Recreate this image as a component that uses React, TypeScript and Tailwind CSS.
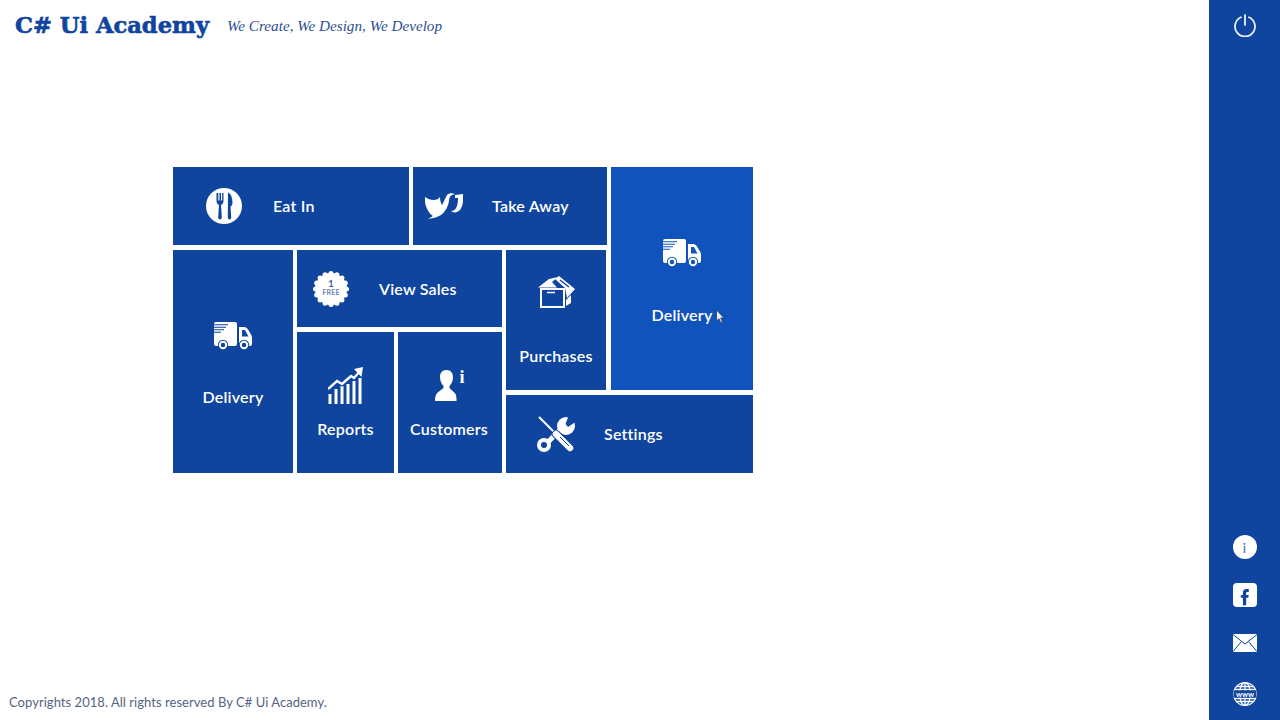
import type { ReactNode } from 'react'

const tileBlue = '#0f459f'
const hoverBlue = '#1053bc'

function Truck({ bg = tileBlue }: { bg?: string }) {
  return (
    <svg width="38" height="28" viewBox="0 0 38 28">
      <rect x="0" y="0" width="23" height="24" rx="2" fill="white" />
      <path d="M0 2.800h14M0 5.300h12M0 7.800h10M0 10.300h7" stroke={bg} strokeWidth="1.100" />
      <path d="M25 5h5c2 0 3 1 4 2.500l3 5c.7 1 1 2 1 3V22c0 1-1 2-2 2H25z" fill="white" />
      <path d="M28 8v6.500h6.500l-2.600-4.800C31.300 8.500 31 8 30 8z" fill={bg} />
      <circle cx="9" cy="23" r="5.200" fill={bg} />
      <circle cx="30" cy="23" r="5.200" fill={bg} />
      <circle cx="9" cy="23" r="3.200" fill="none" stroke="white" strokeWidth="2" />
      <circle cx="30" cy="23" r="3.200" fill="none" stroke="white" strokeWidth="2" />
    </svg>
  )
}

function EatIcon() {
  return (
    <svg width="36" height="36" viewBox="0 0 36 36">
      <circle cx="18" cy="18" r="18" fill="white" />
      <path d="M10.500 5v8c0 2.500 1.500 3.500 2.500 4l-.8 12c0 1.500.6 2.500 1.800 2.500s1.800-1 1.800-2.500l-.8-12c1-.5 2.500-1.500 2.500-4V5h-1.300v7.500h-1.200V5h-1.500v7.500h-1.200V5z" fill={tileBlue} />
      <path d="M22 4.500c2.800 1 4.500 5 4.500 10 0 2-.8 3.500-2 4l.7 10.500c0 1.500-.6 2.500-1.700 2.500S21.800 30.500 21.800 29z" fill={tileBlue} />
    </svg>
  )
}

function TakeAwayIcon() {
  return (
    <svg width="38" height="28" viewBox="0 0 38 28" fill="white">
      <path d="M0 5C4 8 9 9 13 7L15 5C15 9 16 11 17 13C19 10 20 6 22 3C24 1 27 1 30 2L27 3C25 4 24 6 24 9C23 15 20 20 16 23C13 25 9 26 3 27L8 24C3 21-1 12 0 5z" />
      <path d="M30 3L38 2C38.500 8 38 14 35 18C32 21 28 21 26 19C29 19 31 17 32 14C33 11 33 8 33 6L30 6z" />
    </svg>
  )
}

function BadgeIcon() {
  const dots = Array.from({ length: 16 }, (_, i) => (i * Math.PI) / 8)
  return (
    <svg width="36" height="36" viewBox="0 0 36 36">
      <circle cx="18" cy="18" r="16" fill="white" />
      {dots.map((a) => (
        <circle key={a} cx={18 + 15.5 * Math.cos(a)} cy={18 + 15.5 * Math.sin(a)} r="2.500" fill="white" />
      ))}
      <text x="18" y="16" textAnchor="middle" fontSize="10" fontWeight="700" fill="#3f66a8" fontFamily="Lato, sans-serif">1</text>
      <text x="18" y="24" textAnchor="middle" fontSize="7" fontWeight="700" fill="#6a86b8" fontFamily="Lato, sans-serif">FREE</text>
    </svg>
  )
}

function BoxIcon() {
  return (
    <svg width="37" height="32" viewBox="0 0 37 32" fill="none">
      <path d="M3 13H26V31H3z" stroke="white" strokeWidth="2" />
      <path d="M9 16.500h8" stroke="white" strokeWidth="1.500" />
      <path d="M0 11.500L11 3 20 1 14 6 19 11.500z" fill="white" />
      <path d="M17 3L21 0 37 13 29 22 27 12z" fill="white" />
      <path d="M22 4L31 11" stroke={tileBlue} strokeWidth="1.500" />
      <path d="M28 24L33 19V27L28 30z" fill="white" />
    </svg>
  )
}

function ReportsIcon() {
  const bars = [28, 23, 20, 18, 15, 12]
  return (
    <svg width="36" height="38" viewBox="0 0 36 38" fill="white">
      {bars.map((top, i) => (
        <rect key={i} x={0.5 + i * 6} y={top} width="3" height={38 - top} />
      ))}
      <path d="M0 23L9 15 14 18 23 10 26 12 33 4" fill="none" stroke={tileBlue} strokeWidth="4.500" />
      <path d="M0 23L9 15 14 18 23 10 26 12 33 4" fill="none" stroke="white" strokeWidth="2.400" />
      <path d="M26 3L35 1 33.500 11z" />
    </svg>
  )
}

function CustomerIcon() {
  return (
    <svg width="32" height="34" viewBox="0 0 32 34" fill="white">
      <path d="M12.500 2C17 2 19 5.500 19 9C19 13 17.500 16 15.500 18V20C17 22 21 24 22 27C22.500 29 22.500 31 22.500 33H1C1 31 1 29 2 27C3 24 7.500 22 9.500 20V18C7.500 16 6 13 6 9C6 5 8 2 12.500 2z" />
      <text x="28" y="15" textAnchor="middle" fontSize="18" fill="white" fontFamily="Liberation Serif, serif">i</text>
    </svg>
  )
}

function ToolsIcon() {
  return (
    <svg width="38" height="38" viewBox="0 0 38 38">
      {/* wrench */}
      <path d="M8 30L25 13" stroke="white" strokeWidth="5" />
      <circle cx="7" cy="30" r="7" fill="white" />
      <circle cx="7" cy="30" r="3" fill={tileBlue} />
      <circle cx="29" cy="11" r="9" fill="white" />
      <path d="M28.500 9L32 0 40 0 40 6 31 12z" fill={tileBlue} />
      {/* screwdriver */}
      <path d="M2 2L19 19" stroke={tileBlue} strokeWidth="4.500" />
      <path d="M2 2L19 19" stroke="white" strokeWidth="2" />
      <path d="M19 19L33 33" stroke={tileBlue} strokeWidth="8.500" strokeLinecap="round" />
      <path d="M19 19L33 33" stroke="white" strokeWidth="6.500" strokeLinecap="round" />
      <path d="M23 22L32 31" stroke={tileBlue} strokeWidth="1" />
    </svg>
  )
}

function Tile({ className, children }: { className: string; children: ReactNode }) {
  return <div className={`text-[16px] font-semibold tracking-[0.2px] text-white ${className}`}>{children}</div>
}

export default function App() {
  return (
    <div className="flex h-screen w-full overflow-hidden bg-white font-['Lato',sans-serif]">
      <div className="flex min-w-0 flex-1 flex-col">
        {/* Header */}
        <header className="flex items-center pt-[9px] pl-[15px]">
          <h1 className="font-['DejaVu_Serif',serif] text-[22.600px] leading-[32px] font-bold text-[#0f459f] [-webkit-text-stroke:0.6px_#0f459f]">C# Ui Academy</h1>
          <span className="mt-[2px] ml-[18px] font-['Liberation_Serif',serif] text-[15.200px] text-[#2c4f8f] italic">We Create, We Design, We Develop</span>
        </header>

        {/* Tiles */}
        <div className="mt-[126px] ml-[173px] grid w-[580px] grid-cols-[120px_97px_11px_89px_101px_142px] grid-rows-[78px_77px_58px_78px] gap-x-[4px] gap-y-[5px]">
          <Tile className="col-span-3 flex items-center bg-[#0f459f] pl-[33px]">
            <EatIcon />
            <span className="ml-[31px]">Eat In</span>
          </Tile>
          <Tile className="col-span-2 flex items-center bg-[#0f459f] pl-[12px]">
            <TakeAwayIcon />
            <span className="ml-[29px]">Take Away</span>
          </Tile>
          <Tile className="col-start-6 row-span-3 row-start-1 flex flex-col items-center bg-[#1053bc] pt-[72px]">
            <Truck bg={hoverBlue} />
            <span className="mt-[36px]">Delivery</span>
          </Tile>
          <Tile className="row-span-3 flex flex-col items-center bg-[#0f459f] pt-[72px]">
            <Truck />
            <span className="mt-[35px]">Delivery</span>
          </Tile>
          <Tile className="col-span-3 flex items-center bg-[#0f459f] pl-[16px]">
            <BadgeIcon />
            <span className="ml-[30px]">View Sales</span>
          </Tile>
          <Tile className="row-span-2 mr-[1px] flex flex-col items-center bg-[#0f459f] pt-[26px]">
            <BoxIcon />
            <span className="mt-[36px]">Purchases</span>
          </Tile>
          <Tile className="col-start-2 row-span-2 flex flex-col items-center bg-[#0f459f] pt-[34px]">
            <ReportsIcon />
            <span className="mt-[13px]">Reports</span>
          </Tile>
          <Tile className="col-span-2 row-span-2 flex flex-col items-center bg-[#0f459f] pt-[36px]">
            <CustomerIcon />
            <span className="mt-[15px] mr-[2px]">Customers</span>
          </Tile>
          <Tile className="col-span-2 col-start-5 flex items-center bg-[#0f459f] pl-[31px]">
            <ToolsIcon />
            <span className="ml-[29px]">Settings</span>
          </Tile>
        </div>

        {/* Footer */}
        <footer className="mt-auto pb-[8px] pl-[9px] text-[13px] tracking-[0.04px] text-[#56657f]">Copyrights 2018. All rights reserved By C# Ui Academy.</footer>
      </div>

      {/* Right bar */}
      <aside className="flex w-[71px] shrink-0 flex-col items-center bg-[#0f459f] pt-[13px] pb-[14px]">
        <svg width="24" height="24" viewBox="0 0 24 24" fill="none" stroke="#e8f0fb" strokeWidth="1.800" strokeLinecap="round">
          <path d="M12 2v10" />
          <path d="M8 4.300a10 10 0 1 0 8 0" />
        </svg>
        <div className="mt-auto flex flex-col items-center">
          <div className="flex h-[24px] w-[24px] items-center justify-center rounded-full bg-white text-[14px] text-[#3f66a8]">i</div>
          <div className="mt-[24px] flex h-[24px] w-[24px] items-end justify-center rounded-[4px] bg-white">
            <svg width="10" height="20" viewBox="0 0 12 20" fill="#0f459f">
              <path d="M3.500 20V11H1V7.500h2.500V5c0-3 1.700-4.500 4.300-4.500H10.500V4H9c-1.200 0-1.600.6-1.600 1.700v1.800h3L10 11H7.400v9z" />
            </svg>
          </div>
          <svg className="mt-[27px]" width="24" height="18" viewBox="0 0 24 18">
            <rect width="24" height="18" fill="white" />
            <path d="M0 .5l12 9.500L24 .5M0 17.500l8.500-10M24 17.500l-8.500-10" fill="none" stroke="#0f459f" strokeWidth="1" />
          </svg>
          <svg className="mt-[30px]" width="24" height="24" viewBox="0 0 24 24" fill="white" fillOpacity="0.25" stroke="white" strokeWidth="1.100">
            <circle cx="12" cy="12" r="11.400" />
            <ellipse cx="12" cy="12" rx="5.500" ry="11.400" fill="none" />
            <path d="M12 .5v23M3 4.500h18M1.500 7.500h21M1.500 16.500h21M3 19.500h18" fill="none" />
            <rect x="0.500" y="8.500" width="23" height="7" fill="#0f459f" fillOpacity="1" stroke="none" />
            <text x="12" y="14.500" textAnchor="middle" fontSize="7.500" fontWeight="700" fill="white" fillOpacity="1" stroke="none" fontFamily="Lato, sans-serif">www</text>
          </svg>
        </div>
      </aside>

      {/* Mouse pointer */}
      <svg className="absolute top-[309px] left-[716px]" width="9" height="15" viewBox="0 0 9 14">
        <path d="M.5.500v11l2.500-2.300 1.800 4 1.700-.8-1.800-3.900H8z" fill="#e9eef7" stroke="#1a2c52" strokeWidth=".700" />
      </svg>
    </div>
  )
}
